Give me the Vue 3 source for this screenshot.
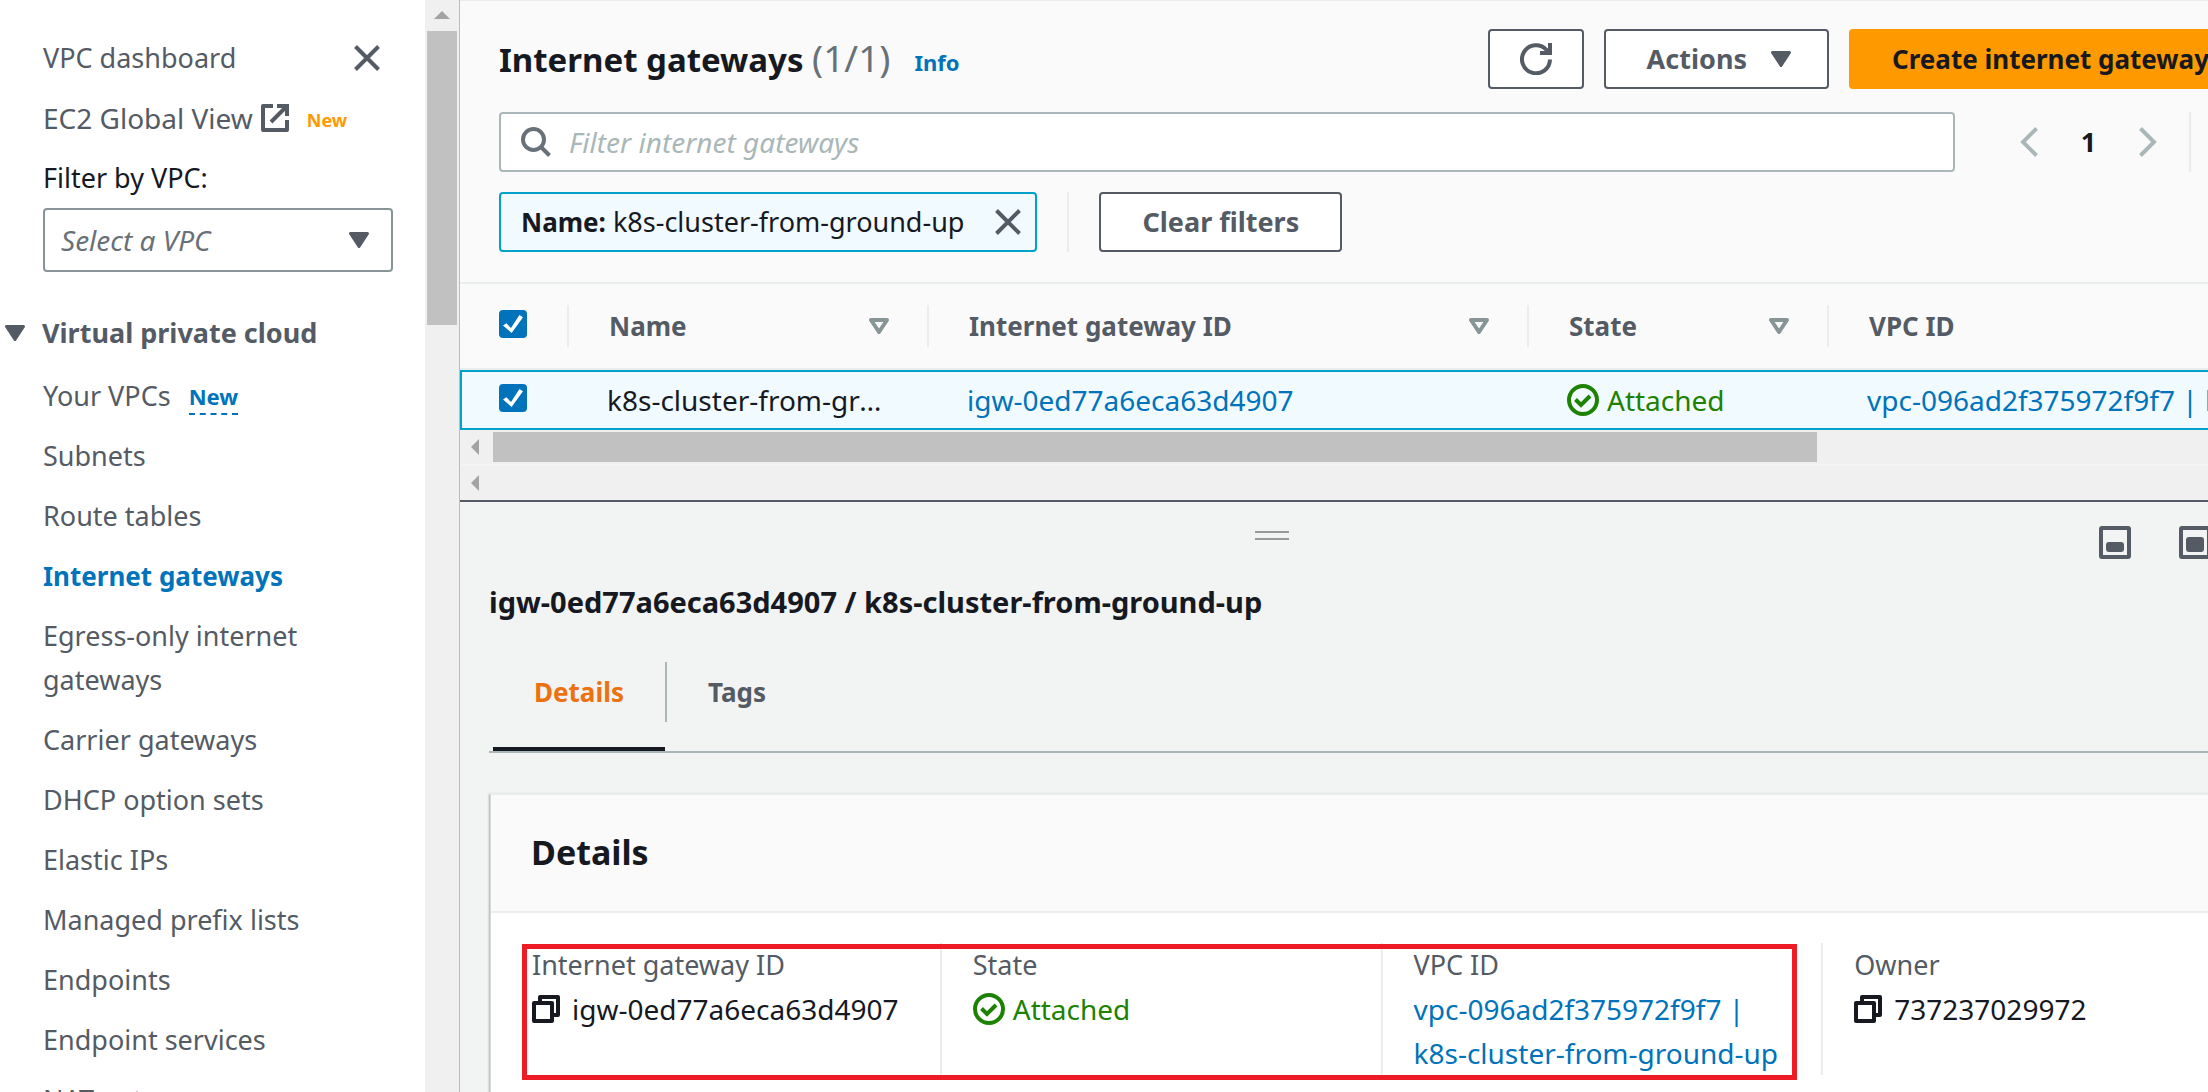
<script setup>
import { ref } from 'vue'

const navItems = [
  { label: 'Your VPCs', badge: 'New' },
  { label: 'Subnets' },
  { label: 'Route tables' },
  { label: 'Internet gateways', active: true },
  { label: 'Egress-only internet gateways' },
  { label: 'Carrier gateways' },
  { label: 'DHCP option sets' },
  { label: 'Elastic IPs' },
  { label: 'Managed prefix lists' },
  { label: 'Endpoints' },
  { label: 'Endpoint services' },
  { label: 'NAT gateways' },
]
const columns = [
  { label: 'Name', sortable: true },
  { label: 'Internet gateway ID', sortable: true },
  { label: 'State', sortable: true },
  { label: 'VPC ID', sortable: false },
]
const allSelected = ref(true)
const rowSelected = ref(true)
const query = ref('')
const vpc = ref('')
</script>

<template>
  <div class="console">
    <aside class="sidebar">
      <nav class="nav" aria-label="VPC">
        <div class="nav-row top">
          <a href="#">VPC dashboard</a>
          <button class="bare" type="button" aria-label="Close navigation">
            <svg width="26" height="26" viewBox="0 0 26 26"><path d="M1.500 1.500 24.500 24.500M24.500 1.500 1.500 24.500" fill="none" stroke="#545b64" stroke-width="4" /></svg>
          </button>
        </div>
        <div class="nav-row global">
          <a href="#">EC2 Global View</a>
          <svg class="external" width="28" height="28" viewBox="0 0 28 28" fill="none" stroke="#545b64" stroke-width="4">
            <path d="M12 2H2V26H26V16" stroke-linejoin="round" /><path d="M16 2H26V12M25 3 10 18" />
          </svg>
          <span class="new-tag">New</span>
        </div>
        <label class="nav-row filter-label" for="vpc-filter">Filter by VPC:</label>
        <div class="select-wrap">
          <select id="vpc-filter" v-model="vpc">
            <option value="">Select a VPC</option>
          </select>
          <svg class="caret" width="20" height="16" viewBox="0 0 20 16"><path d="M1.500 1.500H18.500L10 14.500Z" fill="#545b64" stroke="#545b64" stroke-width="3" stroke-linejoin="round" /></svg>
        </div>
        <h2 class="section">
          <svg width="20" height="16" viewBox="0 0 20 16"><path d="M1.500 1.500H18.500L10 14.500Z" fill="#545b64" stroke="#545b64" stroke-width="3" stroke-linejoin="round" /></svg>
          Virtual private cloud
        </h2>
        <ul>
          <li v-for="item in navItems" :key="item.label">
            <a href="#" :class="{ active: item.active }">{{ item.label }}</a>
            <span v-if="item.badge" class="badge">{{ item.badge }}</span>
          </li>
        </ul>
      </nav>
      <div class="vscroll">
        <svg width="16" height="8" viewBox="0 0 16 8"><path d="M0 8 8 0 16 8Z" fill="#a3a3a3" /></svg>
        <div class="vthumb"></div>
      </div>
    </aside>

    <main class="main">
      <div class="content">
        <header class="toolbar">
          <div class="bar">
            <h1>Internet gateways <span>(1/1)</span></h1>
            <a class="info" href="#">Info</a>
            <div class="actions">
              <button class="btn refresh" type="button" aria-label="Refresh">
                <svg width="32" height="32" viewBox="0 0 32 32"><path d="M30 16.500A14 14 0 1 1 26.500 7" fill="none" stroke="#545b64" stroke-width="4" /><path d="M32 0V12H20V8H25L28 5V0Z" fill="#545b64" /></svg>
              </button>
              <button class="btn menu" type="button">
                Actions
                <svg width="20" height="16" viewBox="0 0 20 16"><path d="M1.500 1.500H18.500L10 14.500Z" fill="#545b64" stroke="#545b64" stroke-width="3" stroke-linejoin="round" /></svg>
              </button>
              <button class="btn primary" type="button">Create internet gateway</button>
            </div>
          </div>

          <div class="bar search-bar">
            <div class="search">
              <svg width="30" height="30" viewBox="0 0 30 30" fill="none" stroke="#687078" stroke-width="4"><circle cx="12.500" cy="12.500" r="10.500" /><path d="M20 20 28.500 28.500" /></svg>
              <input v-model="query" type="text" placeholder="Filter internet gateways" aria-label="Filter internet gateways" />
            </div>
            <div class="pager">
              <button class="bare" type="button" aria-label="Previous page">
                <svg width="18" height="30" viewBox="0 0 18 30"><path d="M16.500 1.500 3 15 16.500 28.500" fill="none" stroke="#aab7b8" stroke-width="4" /></svg>
              </button>
              <span>1</span>
              <button class="bare" type="button" aria-label="Next page">
                <svg width="18" height="30" viewBox="0 0 18 30"><path d="M1.500 1.500 15 15 1.500 28.500" fill="none" stroke="#aab7b8" stroke-width="4" /></svg>
              </button>
            </div>
          </div>

          <div class="bar filters">
            <div class="token">
              <span><b>Name:</b> k8s-cluster-from-ground-up</span>
              <button class="bare" type="button" aria-label="Remove filter">
                <svg width="26" height="26" viewBox="0 0 26 26"><path d="M1.500 1.500 24.500 24.500M24.500 1.500 1.500 24.500" fill="none" stroke="#545b64" stroke-width="4" /></svg>
              </button>
            </div>
            <i class="divider"></i>
            <button class="btn" type="button">Clear filters</button>
          </div>
        </header>

        <table>
          <colgroup>
            <col class="c-check" /><col class="c-name" /><col class="c-id" /><col class="c-state" /><col />
          </colgroup>
          <thead>
            <tr>
              <th class="check"><input v-model="allSelected" type="checkbox" aria-label="Select all" /></th>
              <th v-for="col in columns" :key="col.label">
                <div class="th">
                  {{ col.label }}
                  <svg v-if="col.sortable" width="20" height="16" viewBox="0 0 20 16"><path d="M2 2H18L10 14Z" fill="none" stroke="#879596" stroke-width="4" stroke-linejoin="round" /></svg>
                </div>
              </th>
            </tr>
          </thead>
          <tbody>
            <tr>
              <td class="check"><input v-model="rowSelected" type="checkbox" aria-label="Select k8s-cluster-from-ground-up" /></td>
              <td><div class="clip">k8s-cluster-from-ground-up</div></td>
              <td><a href="#">igw-0ed77a6eca63d4907</a></td>
              <td>
                <span class="status">
                  <svg width="32" height="32" viewBox="0 0 32 32" fill="none" stroke="#1d8102" stroke-width="4"><circle cx="16" cy="16" r="14" /><path d="M8.500 15.500 14 21 23 12" /></svg>Attached
                </span>
              </td>
              <td><a href="#">vpc-096ad2f375972f9f7 | k8s-cluster-from-ground-up</a></td>
            </tr>
          </tbody>
        </table>

        <div class="hscroll">
          <svg width="8" height="16" viewBox="0 0 8 16"><path d="M8 0 0 8 8 16Z" fill="#a3a3a3" /></svg>
          <div class="hthumb"></div>
        </div>
        <div class="hscroll outer">
          <svg width="8" height="16" viewBox="0 0 8 16"><path d="M8 0 0 8 8 16Z" fill="#a3a3a3" /></svg>
        </div>

        <section class="panel">
          <div class="panel-top">
            <div class="handle"></div>
            <div class="sizes">
              <button class="bare" type="button" aria-label="Small panel">
                <svg width="32" height="33" viewBox="0 0 32 33"><rect x="2" y="2" width="28" height="29" rx="1" fill="none" stroke="#545b64" stroke-width="4" /><rect x="7" y="16" width="18" height="10" rx="3" fill="#545b64" /></svg>
              </button>
              <button class="bare" type="button" aria-label="Medium panel">
                <svg width="32" height="33" viewBox="0 0 32 33"><rect x="2" y="2" width="28" height="29" rx="1" fill="none" stroke="#545b64" stroke-width="4" /><rect x="7" y="11" width="18" height="15" rx="3" fill="#545b64" /></svg>
              </button>
            </div>
          </div>
          <h2>igw-0ed77a6eca63d4907 / k8s-cluster-from-ground-up</h2>
          <div class="tabs" role="tablist">
            <button class="tab selected" type="button" role="tab" aria-selected="true"><span>Details</span></button>
            <button class="tab" type="button" role="tab" aria-selected="false"><span>Tags</span></button>
          </div>

          <article class="card">
            <h3>Details</h3>
            <dl>
              <div>
                <dt>Internet gateway ID</dt>
                <dd>
                  <svg class="copy" width="28" height="28" viewBox="0 0 28 28" fill="none" stroke="#16191f" stroke-width="4" stroke-linejoin="round"><path d="M8 6V2H26V20H21" /><path d="M2 8H20V26H2Z" /></svg>igw-0ed77a6eca63d4907
                </dd>
              </div>
              <div>
                <dt>State</dt>
                <dd class="status">
                  <svg width="32" height="32" viewBox="0 0 32 32" fill="none" stroke="#1d8102" stroke-width="4"><circle cx="16" cy="16" r="14" /><path d="M8.500 15.500 14 21 23 12" /></svg>Attached
                </dd>
              </div>
              <div>
                <dt>VPC ID</dt>
                <dd><a href="#">vpc-096ad2f375972f9f7 |<br />k8s-cluster-from-ground-up</a></dd>
              </div>
              <div>
                <dt>Owner</dt>
                <dd>
                  <svg class="copy" width="28" height="28" viewBox="0 0 28 28" fill="none" stroke="#16191f" stroke-width="4" stroke-linejoin="round"><path d="M8 6V2H26V20H21" /><path d="M2 8H20V26H2Z" /></svg>737237029972
                </dd>
              </div>
              <i class="highlight"></i>
            </dl>
          </article>
        </section>
      </div>
    </main>
  </div>
</template>

<style>
body {
  margin: 0;
  overflow: hidden;
}
</style>

<style scoped>
.console {
  --text: 27px;
  --value: 28px;
  --bold: 26px;
  display: flex;
  height: 100vh;
  overflow: hidden;
  font-family: 'Noto Sans', 'Open Sans', sans-serif;
  font-size: var(--text);
  line-height: 44px;
  color: #16191f;
  background: #f2f3f3;
}
.console *,
.console *::before {
  box-sizing: border-box;
}
svg {
  display: block;
  flex: none;
}
a {
  color: #0073bb;
  text-decoration: none;
}
button,
input,
select {
  font: inherit;
  color: inherit;
}
h1, h2, h3, ul, dl, dd {
  margin: 0;
  padding: 0;
}
b, h2, th {
  font-size: var(--bold);
  font-weight: 700;
}
.bare {
  padding: 0;
  border: 0;
  background: none;
}

/* Sidebar */
.sidebar {
  display: flex;
  flex: none;
  width: 460px;
  background: #fff;
  border-right: 1px solid #b9bfc1;
}
.nav {
  flex: 1;
  padding: 36px 32px 0 43px;
}
.nav a {
  color: #545b64;
}
.nav-row {
  display: flex;
  align-items: center;
  height: 44px;
  margin-bottom: 16px;
}
.nav-row.top {
  justify-content: space-between;
  padding-right: 13px;
}
.global {
  font-size: var(--value);
}
.external {
  margin: 0 18px 0 8px;
}
.new-tag {
  padding-top: 4px;
  color: #ff9900;
  font-size: 18px;
  font-weight: 700;
}
.filter-label {
  margin-bottom: 8px;
}
.select-wrap {
  position: relative;
}
select {
  display: block;
  width: 100%;
  height: 64px;
  padding: 0 16px;
  appearance: none;
  border: 2px solid #879596;
  border-radius: 4px;
  background: #fff;
  color: #687078;
  font-size: var(--value);
  font-style: italic;
}
.caret {
  position: absolute;
  top: 24px;
  right: 24px;
}
.section {
  display: flex;
  align-items: center;
  gap: 17px;
  margin: 39px 0 19px -38px;
  color: #545b64;
  font-size: var(--text);
}
ul {
  list-style: none;
}
li {
  display: flex;
  gap: 18px;
  margin-bottom: 16px;
}
.nav .active {
  color: #0073bb;
  font-size: var(--bold);
  font-weight: 700;
}
.badge {
  height: 41px;
  border-bottom: 2px dashed #0073bb;
  color: #0073bb;
  font-size: 22px;
  font-weight: 700;
}
.vscroll {
  display: flex;
  flex-direction: column;
  align-items: center;
  width: 34px;
  padding: 11px 2px 0;
  background: #f0f0f0;
}
.vthumb {
  width: 100%;
  height: 294px;
  margin-top: 12px;
  background: #c1c1c1;
}

/* Main area */
.main {
  flex: 1;
  min-width: 0;
  overflow: hidden;
}
.content {
  width: calc(100% + 96px);
}
.toolbar {
  display: flex;
  flex-direction: column;
  padding: 28px 39px 30px;
  border-top: 1px solid #eaeded;
  border-bottom: 2px solid #eaeded;
  background: #fafafa;
}
.bar {
  display: flex;
  align-items: center;
  height: 60px;
}
h1 {
  font-size: 33px;
  font-weight: 700;
}
h1 span {
  color: #687078;
  font-size: 37px;
  font-weight: 400;
}
.info {
  margin: 6px 0 0 24px;
  font-size: 22px;
  font-weight: 700;
}
.actions {
  display: flex;
  gap: 20px;
  margin-left: auto;
}
.btn {
  display: flex;
  align-items: center;
  height: 60px;
  padding: 0 41px;
  border: 2px solid #545b64;
  border-radius: 4px;
  background: #fff;
  color: #545b64;
  font-size: var(--text);
  font-weight: 700;
  white-space: nowrap;
}
.refresh {
  padding: 0 30px;
}
.menu {
  gap: 24px;
  padding-right: 36px;
}
.primary {
  padding-right: 54px;
  border-color: #ff9900;
  background: #ff9900;
  color: #16191f;
  font-size: var(--bold);
}
.search-bar {
  margin-top: 23px;
}
.search {
  display: flex;
  flex: 1;
  align-items: center;
  height: 60px;
  padding: 0 20px;
  border: 2px solid #aab7b8;
  border-radius: 4px;
  background: #fff;
}
.search input {
  flex: 1;
  min-width: 0;
  padding: 0 18px;
  border: 0;
  outline: 0;
  background: none;
  font-size: var(--value);
}
.search input::placeholder {
  color: #aab7b8;
  font-style: italic;
}
.pager {
  display: flex;
  align-items: center;
  height: 60px;
  margin: 0 74px 0 65px;
  padding-right: 32px;
  border-right: 2px solid #eaeded;
  font-weight: 700;
}
.pager span {
  width: 101px;
  text-align: center;
}
.filters {
  margin-top: 20px;
}
.token {
  display: flex;
  align-items: center;
  gap: 31px;
  height: 60px;
  padding: 0 14px 0 20px;
  border: 2px solid #00a1c9;
  border-radius: 4px;
  background: #f1faff;
}
.divider {
  height: 60px;
  margin: 0 30px;
  border-left: 2px solid #eaeded;
}

/* Gateway table */
table {
  width: 100%;
  table-layout: fixed;
  border-collapse: separate;
  border-spacing: 0;
  background: #fafafa;
}
.c-check { width: 107px; }
.c-name { width: 360px; }
.c-id { width: 600px; }
.c-state { width: 300px; }
th {
  height: 86px;
  padding: 0;
  border-bottom: 2px solid #eaeded;
  color: #545b64;
  text-align: left;
}
.th {
  display: flex;
  align-items: center;
  justify-content: space-between;
  height: 42px;
  padding: 0 38px 0 40px;
  border-left: 2px solid #eaeded;
}
td {
  height: 60px;
  padding: 0 44px 0 40px;
  border-top: 2px solid #00a1c9;
  border-bottom: 2px solid #00a1c9;
  background: #f1faff;
  font-size: var(--value);
  white-space: nowrap;
}
td:first-child {
  border-left: 2px solid #00a1c9;
}
.check {
  padding: 0 0 0 39px;
}
td.check {
  padding-left: 37px;
}
.clip {
  overflow: hidden;
  text-overflow: ellipsis;
}
input[type='checkbox'] {
  display: block;
  width: 28px;
  height: 28px;
  margin: 0 0 4px;
  appearance: none;
  border-radius: 4px;
  background: #fff;
}
input[type='checkbox']:checked {
  background: #0073bb;
}
input[type='checkbox']:checked::before {
  display: block;
  width: 20px;
  height: 18px;
  margin: 5px 4px;
  background: #fff;
  clip-path: polygon(0 58%, 17% 46%, 40% 72%, 82% 0, 100% 12%, 43% 100%);
  content: '';
}
.status {
  display: flex;
  align-items: center;
  gap: 8px;
  color: #1d8102;
}
.hscroll {
  display: flex;
  align-items: center;
  gap: 14px;
  height: 34px;
  padding-left: 11px;
  background: #f0f0f0;
}
.hscroll.outer {
  margin-top: 2px;
}
.hthumb {
  width: calc(72% + 4px);
  height: 30px;
  background: #c1c1c1;
}

/* Split panel */
.panel {
  padding-left: 29px;
  border-top: 2px solid #545b64;
}
.panel-top {
  display: flex;
  align-items: flex-start;
  padding-top: 24px;
}
.handle {
  width: 34px;
  height: 9px;
  margin: 5px 0 0 auto;
  border-top: 2px solid #999;
  border-bottom: 2px solid #999;
}
.sizes {
  display: flex;
  flex: 0 0 1015px;
  gap: 48px;
  padding-left: 810px;
}
.panel h2 {
  margin-top: 21px;
  font-size: 29px;
}
.tabs {
  display: flex;
  margin-top: 38px;
  padding-left: 4px;
  border-bottom: 2px solid #aab7b8;
}
.tab {
  padding: 0 0 25px;
  border: 0;
  border-bottom: 4px solid transparent;
  background: none;
  color: #545b64;
  font-size: var(--bold);
  font-weight: 700;
}
.tab span {
  display: block;
  padding: 8px 41px;
}
.tab.selected {
  border-bottom-color: #16191f;
  color: #ec7211;
}
.tab + .tab span {
  border-left: 2px solid #aab7b8;
}
.card {
  margin: 40px 42px 0 1px;
  border-top: 2px solid #eaeded;
  border-left: 1px solid #d5dbdb;
  background: #fff;
  box-shadow: -1px 1px 2px rgba(0, 28, 36, 0.3);
}
h3 {
  padding: 35px 40px 37px;
  border-bottom: 2px solid #eaeded;
  background: #fafafa;
  font-size: 34px;
  font-weight: 700;
}
dl {
  position: relative;
  display: grid;
  grid-template-columns: repeat(4, 1fr);
  padding: 30px 0 60px 8px;
}
dl div {
  min-height: 132px;
  padding-left: 31px;
  border-left: 2px solid #eaeded;
}
dl div:first-child {
  border-left-color: transparent;
}
dt {
  color: #545b64;
}
dd {
  display: flex;
  align-items: center;
  gap: 12px;
  font-size: var(--value);
}
dd.status {
  gap: 8px;
}
.highlight {
  position: absolute;
  top: 31px;
  left: 31px;
  width: calc(75% - 53px);
  height: 136px;
  border: 5px solid #ed1c24;
}
</style>
